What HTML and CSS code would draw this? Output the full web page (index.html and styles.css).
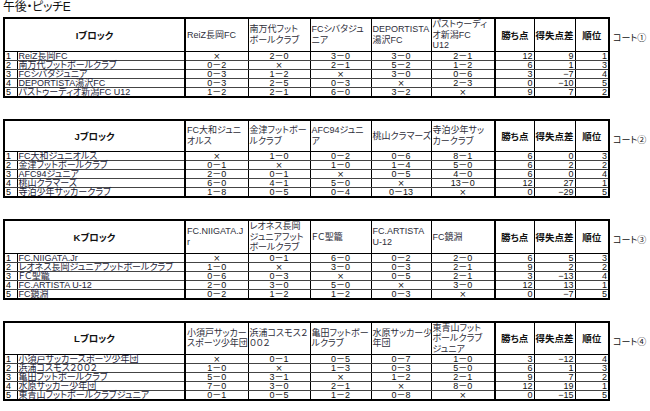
FILE: index.html
```html
<!DOCTYPE html>
<html lang="ja">
<head>
<meta charset="utf-8">
<title>午後・ピッチE</title>
<link rel="stylesheet" href="styles.css">
</head>
<body>
<div class="page">
  <div class="title">午後・ピッチE</div>

  <section class="block">
    <table class="league">
      <colgroup>
        <col class="c-num"><col class="c-name"><col class="c-t1"><col class="c-t2"><col class="c-t3"><col class="c-t4"><col class="c-t5"><col class="c-pts"><col class="c-diff"><col class="c-rank">
      </colgroup>
      <thead>
        <tr>
          <th colspan="2" class="blk">Iブロック</th>
          <th class="team first">ReiZ長岡FC</th>
          <th class="team">南万代フット<br>ボールクラブ</th>
          <th class="team">FCシバタジュ<br>ニア</th>
          <th class="team">DEPORTISTA<br>湯沢FC</th>
          <th class="team">パストゥーディ<br>オ新潟FC<br>U12</th>
          <th class="stat first">勝ち点</th>
          <th class="stat">得失点差</th>
          <th class="stat">順位</th>
        </tr>
      </thead>
      <tbody>
        <tr><td class="num">1</td><td class="name">ReiZ長岡FC</td><td class="sc x first">×</td><td class="sc">2－0</td><td class="sc">3－0</td><td class="sc">3－0</td><td class="sc">2－1</td><td class="st first">12</td><td class="st">9</td><td class="st">1</td></tr>
        <tr><td class="num">2</td><td class="name">南万代フットボールクラブ</td><td class="sc first">0－2</td><td class="sc x">×</td><td class="sc">2－1</td><td class="sc">5－2</td><td class="sc">1－2</td><td class="st first">6</td><td class="st">1</td><td class="st">3</td></tr>
        <tr><td class="num">3</td><td class="name">FCシバタジュニア</td><td class="sc first">0－3</td><td class="sc">1－2</td><td class="sc x">×</td><td class="sc">3－0</td><td class="sc">0－6</td><td class="st first">3</td><td class="st">−7</td><td class="st">4</td></tr>
        <tr><td class="num">4</td><td class="name">DEPORTISTA湯沢FC</td><td class="sc first">0－3</td><td class="sc">2－5</td><td class="sc">0－3</td><td class="sc x">×</td><td class="sc">2－3</td><td class="st first">0</td><td class="st">−10</td><td class="st">5</td></tr>
        <tr><td class="num">5</td><td class="name">パストゥーディオ新潟FC U12</td><td class="sc first">1－2</td><td class="sc">2－1</td><td class="sc">6－0</td><td class="sc">3－2</td><td class="sc x">×</td><td class="st first">9</td><td class="st">7</td><td class="st">2</td></tr>
      </tbody>
    </table>
    <div class="court">コート①</div>
  </section>

  <section class="block">
    <table class="league">
      <colgroup>
        <col class="c-num"><col class="c-name"><col class="c-t1"><col class="c-t2"><col class="c-t3"><col class="c-t4"><col class="c-t5"><col class="c-pts"><col class="c-diff"><col class="c-rank">
      </colgroup>
      <thead>
        <tr>
          <th colspan="2" class="blk">Jブロック</th>
          <th class="team first">FC大和ジュニ<br>オルス</th>
          <th class="team">金津フットボー<br>ルクラブ</th>
          <th class="team">AFC94ジュニ<br>ア</th>
          <th class="team">桃山クラマーズ</th>
          <th class="team">寺泊少年サッ<br>カークラブ</th>
          <th class="stat first">勝ち点</th>
          <th class="stat">得失点差</th>
          <th class="stat">順位</th>
        </tr>
      </thead>
      <tbody>
        <tr><td class="num">1</td><td class="name">FC大和ジュニオルス</td><td class="sc x first">×</td><td class="sc">1－0</td><td class="sc">0－2</td><td class="sc">0－6</td><td class="sc">8－1</td><td class="st first">6</td><td class="st">0</td><td class="st">3</td></tr>
        <tr><td class="num">2</td><td class="name">金津フットボールクラブ</td><td class="sc first">0－1</td><td class="sc x">×</td><td class="sc">1－0</td><td class="sc">1－4</td><td class="sc">5－0</td><td class="st first">6</td><td class="st">2</td><td class="st">2</td></tr>
        <tr><td class="num">3</td><td class="name">AFC94ジュニア</td><td class="sc first">2－0</td><td class="sc">0－1</td><td class="sc x">×</td><td class="sc">0－5</td><td class="sc">4－0</td><td class="st first">6</td><td class="st">0</td><td class="st">4</td></tr>
        <tr><td class="num">4</td><td class="name">桃山クラマーズ</td><td class="sc first">6－0</td><td class="sc">4－1</td><td class="sc">5－0</td><td class="sc x">×</td><td class="sc">13－0</td><td class="st first">12</td><td class="st">27</td><td class="st">1</td></tr>
        <tr><td class="num">5</td><td class="name">寺泊少年サッカークラブ</td><td class="sc first">1－8</td><td class="sc">0－5</td><td class="sc">0－4</td><td class="sc">0－13</td><td class="sc x">×</td><td class="st first">0</td><td class="st">−29</td><td class="st">5</td></tr>
      </tbody>
    </table>
    <div class="court">コート②</div>
  </section>

  <section class="block">
    <table class="league">
      <colgroup>
        <col class="c-num"><col class="c-name"><col class="c-t1"><col class="c-t2"><col class="c-t3"><col class="c-t4"><col class="c-t5"><col class="c-pts"><col class="c-diff"><col class="c-rank">
      </colgroup>
      <thead>
        <tr>
          <th colspan="2" class="blk">Kブロック</th>
          <th class="team first">FC.NIIGATA.J<br>r</th>
          <th class="team">レオネス長岡<br>ジュニアフット<br>ボールクラブ</th>
          <th class="team">ＦＣ聖籠</th>
          <th class="team">FC.ARTISTA<br>U-12</th>
          <th class="team">FC鏡淵</th>
          <th class="stat first">勝ち点</th>
          <th class="stat">得失点差</th>
          <th class="stat">順位</th>
        </tr>
      </thead>
      <tbody>
        <tr><td class="num">1</td><td class="name">FC.NIIGATA.Jr</td><td class="sc x first">×</td><td class="sc">0－1</td><td class="sc">6－0</td><td class="sc">0－2</td><td class="sc">2－0</td><td class="st first">6</td><td class="st">5</td><td class="st">3</td></tr>
        <tr><td class="num">2</td><td class="name">レオネス長岡ジュニアフットボールクラブ</td><td class="sc first">1－0</td><td class="sc x">×</td><td class="sc">3－0</td><td class="sc">0－3</td><td class="sc">2－1</td><td class="st first">9</td><td class="st">2</td><td class="st">2</td></tr>
        <tr><td class="num">3</td><td class="name">ＦＣ聖籠</td><td class="sc first">0－6</td><td class="sc">0－3</td><td class="sc x">×</td><td class="sc">0－5</td><td class="sc">2－1</td><td class="st first">3</td><td class="st">−13</td><td class="st">4</td></tr>
        <tr><td class="num">4</td><td class="name">FC.ARTISTA U-12</td><td class="sc first">2－0</td><td class="sc">3－0</td><td class="sc">5－0</td><td class="sc x">×</td><td class="sc">3－0</td><td class="st first">12</td><td class="st">13</td><td class="st">1</td></tr>
        <tr><td class="num">5</td><td class="name">FC鏡淵</td><td class="sc first">0－2</td><td class="sc">1－2</td><td class="sc">1－2</td><td class="sc">0－3</td><td class="sc x">×</td><td class="st first">0</td><td class="st">−7</td><td class="st">5</td></tr>
      </tbody>
    </table>
    <div class="court">コート③</div>
  </section>

  <section class="block">
    <table class="league">
      <colgroup>
        <col class="c-num"><col class="c-name"><col class="c-t1"><col class="c-t2"><col class="c-t3"><col class="c-t4"><col class="c-t5"><col class="c-pts"><col class="c-diff"><col class="c-rank">
      </colgroup>
      <thead>
        <tr>
          <th colspan="2" class="blk">Lブロック</th>
          <th class="team first">小須戸サッカー<br>スポーツ少年団</th>
          <th class="team">浜浦コスモス２<br>００２</th>
          <th class="team">亀田フットボー<br>ルクラブ</th>
          <th class="team">水原サッカー少<br>年団</th>
          <th class="team">東青山フット<br>ボールクラブ<br>ジュニア</th>
          <th class="stat first">勝ち点</th>
          <th class="stat">得失点差</th>
          <th class="stat">順位</th>
        </tr>
      </thead>
      <tbody>
        <tr><td class="num">1</td><td class="name">小須戸サッカースポーツ少年団</td><td class="sc x first">×</td><td class="sc">0－1</td><td class="sc">0－5</td><td class="sc">0－7</td><td class="sc">1－0</td><td class="st first">3</td><td class="st">−12</td><td class="st">4</td></tr>
        <tr><td class="num">2</td><td class="name">浜浦コスモス２００２</td><td class="sc first">1－0</td><td class="sc x">×</td><td class="sc">1－3</td><td class="sc">0－3</td><td class="sc">5－0</td><td class="st first">6</td><td class="st">1</td><td class="st">3</td></tr>
        <tr><td class="num">3</td><td class="name">亀田フットボールクラブ</td><td class="sc first">5－0</td><td class="sc">3－1</td><td class="sc x">×</td><td class="sc">1－2</td><td class="sc">2－1</td><td class="st first">9</td><td class="st">7</td><td class="st">2</td></tr>
        <tr><td class="num">4</td><td class="name">水原サッカー少年団</td><td class="sc first">7－0</td><td class="sc">3－0</td><td class="sc">2－1</td><td class="sc x">×</td><td class="sc">8－0</td><td class="st first">12</td><td class="st">19</td><td class="st">1</td></tr>
        <tr><td class="num">5</td><td class="name">東青山フットボールクラブジュニア</td><td class="sc first">0－1</td><td class="sc">0－5</td><td class="sc">1－2</td><td class="sc">0－8</td><td class="sc x">×</td><td class="st first">0</td><td class="st">−15</td><td class="st">5</td></tr>
      </tbody>
    </table>
    <div class="court">コート④</div>
  </section>
</div>
</body>
</html>
```

FILE: styles.css
```css
html, body {
  margin: 0;
  padding: 0;
  background: #ffffff;
}

body {
  font-family: "Liberation Sans", "Noto Sans CJK JP", sans-serif;
  font-feature-settings: "palt";
  color: #111;
}

.page {
  width: 650px;
  height: 411px;
  overflow: hidden;
}

.title {
  font-size: 12px;
  line-height: 14px;
  padding: 0 0 3px 3px;
  letter-spacing: -0.3px;
}

.block {
  display: flex;
  align-items: flex-start;
  margin: 0 0 21px 3px;
}

.league {
  border-collapse: collapse;
  table-layout: fixed;
  width: 605px;
  border: 2px solid #000;
  font-size: 9px;
}

.c-num { width: 13px; }
.c-name { width: 168px; }
.c-t1 { width: 63px; }
.c-t2 { width: 62px; }
.c-t3 { width: 61px; }
.c-t4 { width: 60px; }
.c-t5 { width: 64px; }
.c-pts { width: 39px; }
.c-diff { width: 41px; }
.c-rank { width: 34px; }

.league th,
.league td {
  padding: 0 1px;
  white-space: nowrap;
}

.league thead tr {
  height: 32px;
}

.league th {
  border-left: 1px solid #000;
  border-bottom: 1px solid #000;
  vertical-align: middle;
}

.league th.first {
  border-left: 2px solid #000;
}

.blk {
  font-weight: bold;
  text-align: center;
  font-size: 9.5px;
}

.team {
  font-weight: normal;
  text-align: left;
  color: #2e2e3a;
  line-height: 10.5px;
  padding-left: 1px;
}

.stat {
  font-weight: bold;
  text-align: center;
  font-size: 9.5px;
}

.league tbody tr {
  height: 9px;
}

.league td {
  border-left: 1px solid #000;
  border-bottom: 1px solid #444;
  line-height: 8px;
  height: 8px;
  vertical-align: middle;
}

.league td.first {
  border-left: 2px solid #000;
}

.num {
  text-align: left;
  padding-left: 2px;
}

.name {
  text-align: left;
  color: #1c1c38;
}

.sc {
  text-align: center;
}

.sc.x {
  font-family: "DejaVu Sans", sans-serif;
  font-feature-settings: normal;
  font-size: 8.5px;
}

.st {
  text-align: right;
}

.court {
  font-size: 9px;
  margin: 14px 0 0 3px;
  white-space: nowrap;
}
```
